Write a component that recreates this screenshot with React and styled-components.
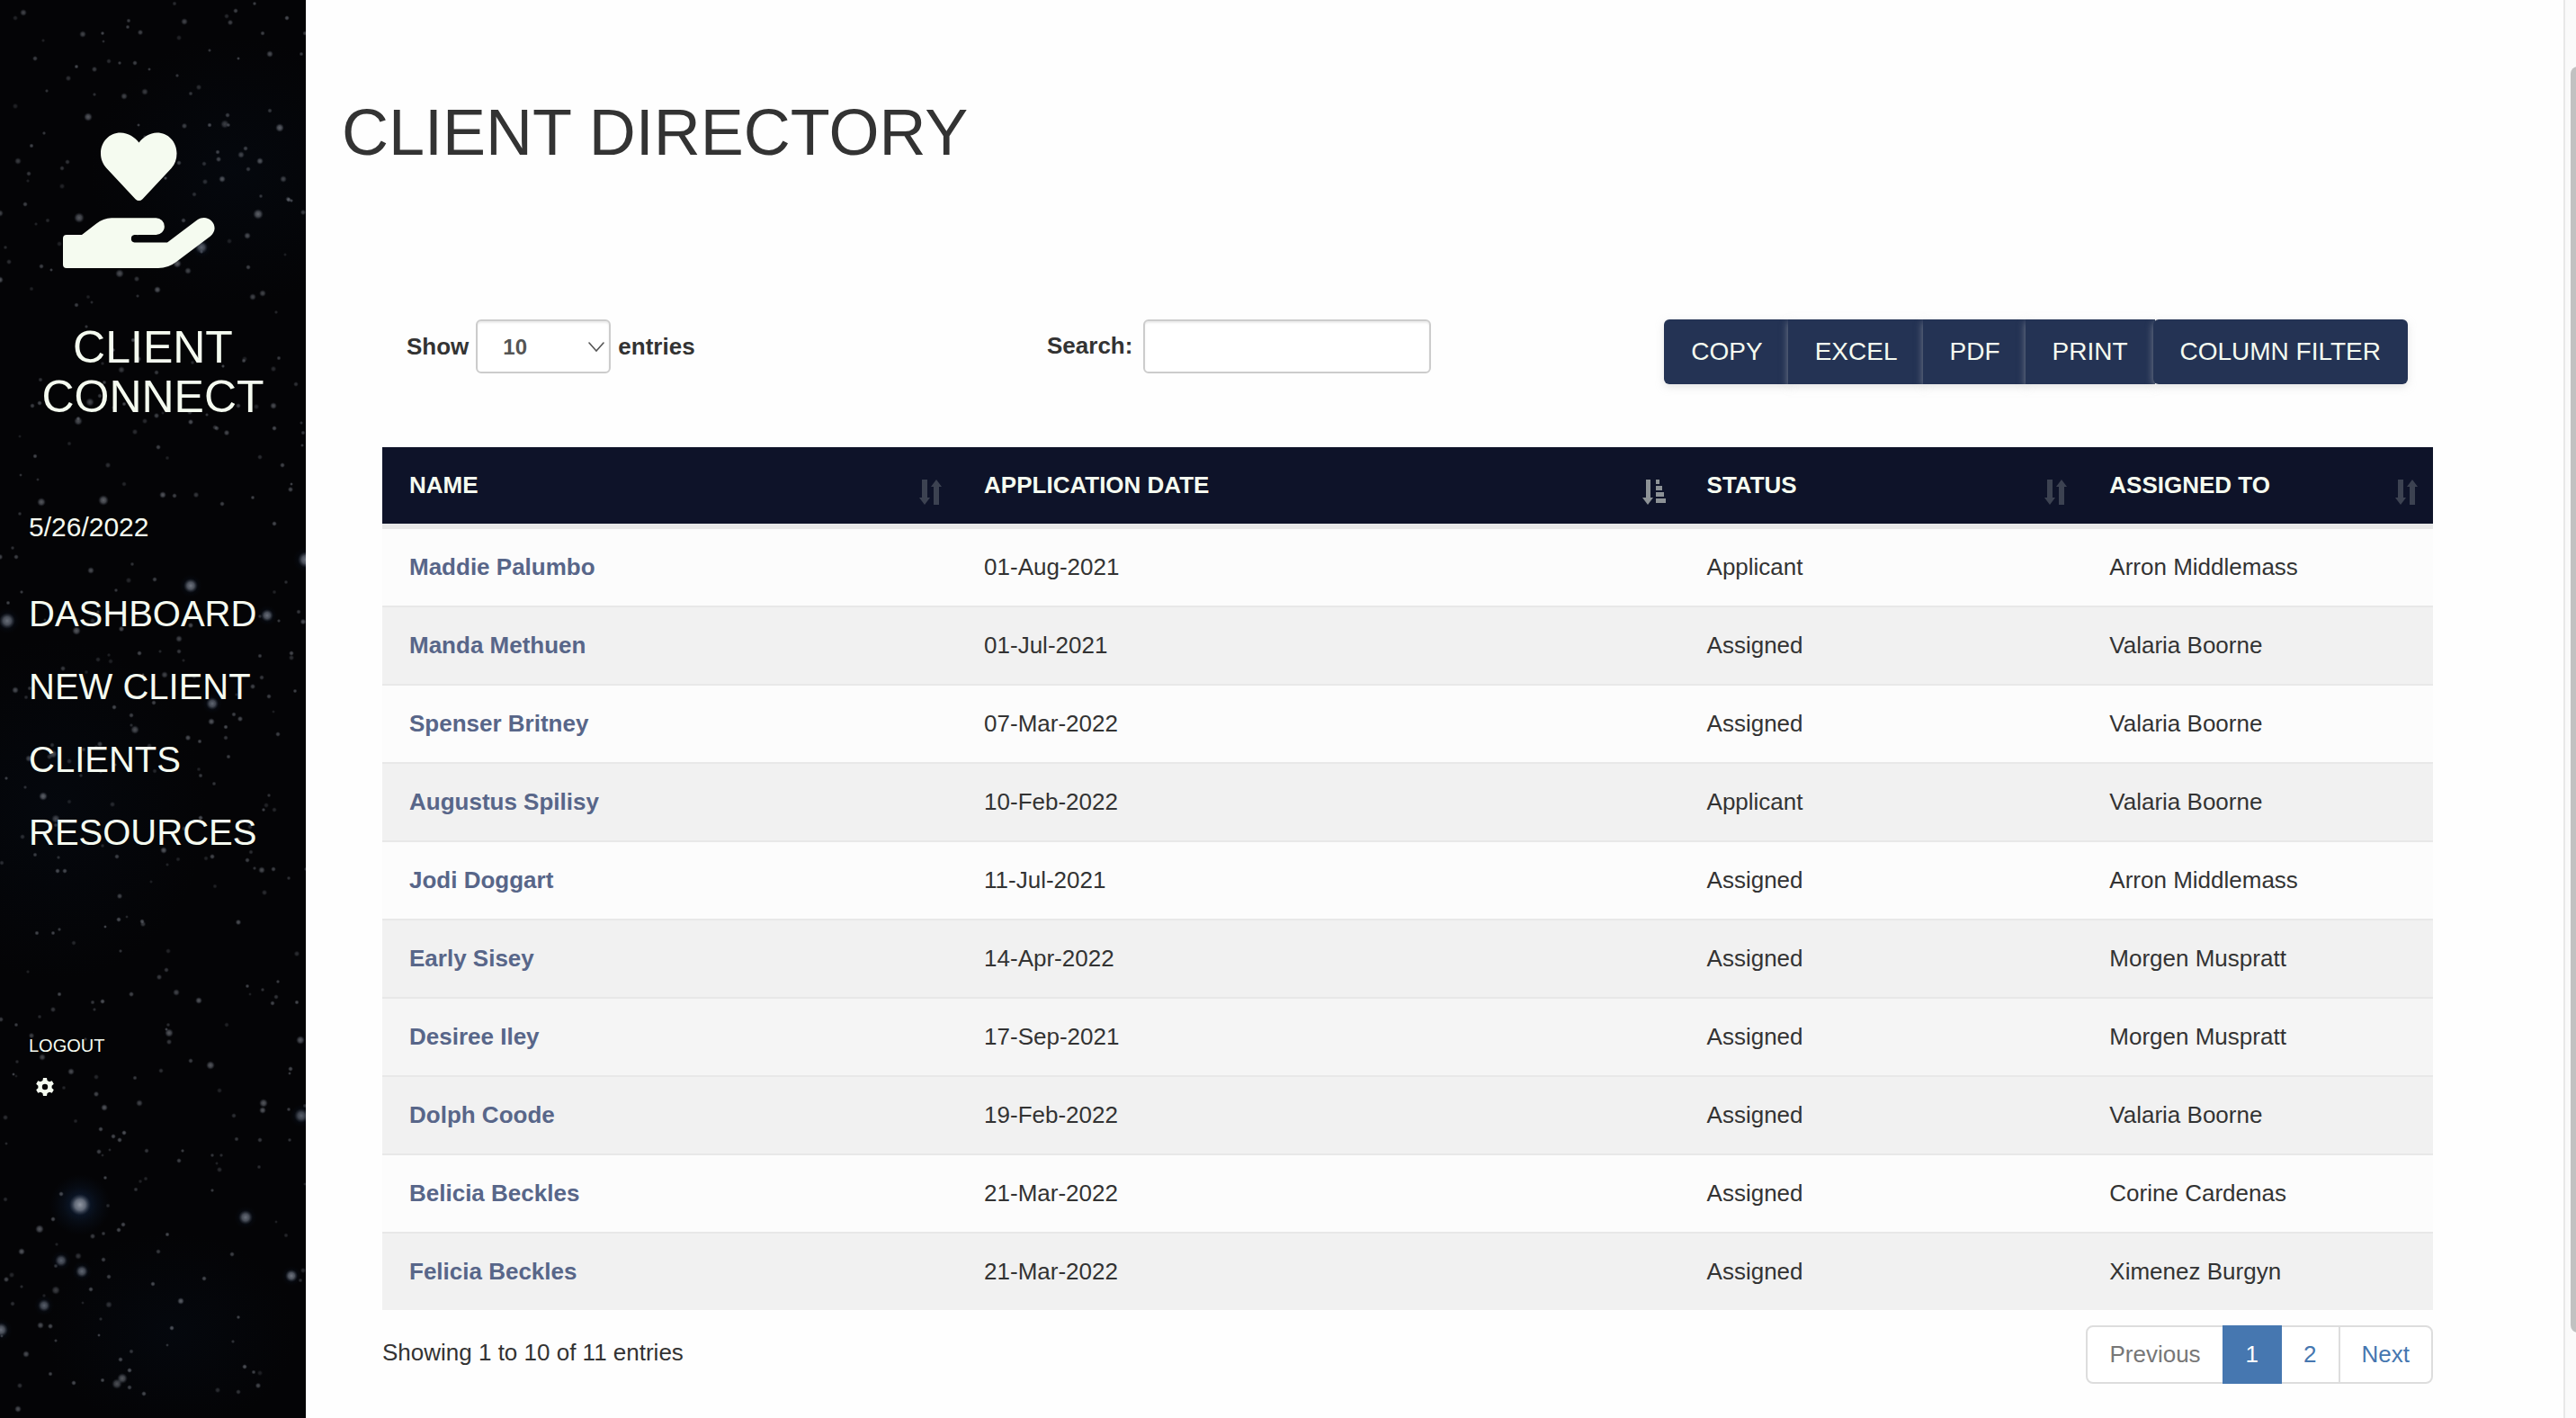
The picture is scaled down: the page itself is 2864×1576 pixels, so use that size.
import React from "react";
import styled, { createGlobalStyle, css } from "styled-components";

const INK = "#333333";
const MINT = "#f5fbf0";
const NAVY = "#0e1329";

const GlobalStyle = createGlobalStyle`
  * { box-sizing: border-box; }
  body {
    margin: 0;
    background: #fefefe;
    color: ${INK};
    font-family: "Liberation Sans", Arial, Helvetica, sans-serif;
    font-size: 26px;
    line-height: 37px;
    overflow: hidden;
  }
  button, input, select { font-family: inherit; }
  a { text-decoration: none; }
`;

const Page = styled.div`
  display: flex;
  height: 100vh;
  overflow: hidden;
`;

/* ---------- sidebar ---------- */

const Sidebar = styled.aside`
  position: relative;
  flex: 0 0 340px;
  overflow: hidden;
  background: #040406;
  color: ${MINT};
`;

const Sky = styled.svg`
  position: absolute;
  inset: 0;
  width: 100%;
  height: 100%;
`;

const SidebarContent = styled.div`
  position: relative;
  display: flex;
  flex-direction: column;
  padding: 147px 0 0;
`;

const Logo = styled.svg`
  width: 169px;
  height: 151px;
  margin-left: 70px;
  fill: ${MINT};
`;

const Brand = styled.h2`
  margin: 61px 0 0;
  font-size: 50px;
  line-height: 55px;
  font-weight: 400;
  text-align: center;
`;

const Today = styled.p`
  margin: 95px 0 0 32px;
  font-size: 30px;
  line-height: 43px;
`;

const Nav = styled.nav`
  display: flex;
  flex-direction: column;
  align-items: flex-start;
  gap: 24px;
  margin: 47px 0 0 32px;
`;

const NavLink = styled.a`
  color: ${MINT};
  font-size: 40px;
  line-height: 57px;
`;

const Account = styled.div`
  display: flex;
  flex-direction: column;
  align-items: flex-start;
  gap: 19px;
  margin: 194px 0 0 32px;
`;

const LogoutLink = styled.a`
  color: ${MINT};
  font-size: 20px;
  line-height: 29px;
`;

const SettingsButton = styled.button`
  display: flex;
  padding: 0;
  margin-left: 6px;
  border: 0;
  background: none;
  color: ${MINT};
`;

/* ---------- main ---------- */

const Main = styled.main`
  flex: 1;
  min-width: 0;
  padding: 108px 145px 0 85px;
`;

const Title = styled.h1`
  margin: 0 0 168px -45px;
  font-size: 72px;
  line-height: 79px;
  font-weight: 400;
`;

const Toolbar = styled.div`
  display: grid;
  grid-template-columns: 32% 1fr auto;
  align-items: start;
  height: 142px;
  padding: 0 28px 0 27px;
`;

const Field = styled.label`
  display: flex;
  align-items: baseline;
  gap: ${(p) => p.$gap}px;
  font-weight: 700;
`;

const control = css`
  height: 60px;
  border: 2px solid #cccccc;
  border-radius: 6px;
  background: #ffffff;
  box-shadow: inset 0 2px 2px rgba(0, 0, 0, 0.075);
  color: #555555;
  font-size: 24px;
`;

const SelectBox = styled.span`
  position: relative;
`;

const LengthSelect = styled.select`
  ${control}
  width: 150px;
  padding: 0 28px;
  appearance: none;
  font-weight: 700;
`;

const Chevron = styled.svg`
  position: absolute;
  right: 7px;
  top: 25px;
  pointer-events: none;
`;

const SearchInput = styled.input`
  ${control}
  width: 320px;
  padding: 10px 20px;
`;

const ButtonGroup = styled.div`
  display: flex;
`;

const ToolButton = styled.button`
  height: 72px;
  margin-left: -2px;
  padding: 0 30px;
  border: 0;
  border-radius: ${(p) => p.$radius};
  background: #243354;
  box-shadow: 0 3px 8px rgba(204, 204, 204, 0.5);
  color: ${MINT};
  font-size: 28px;
  line-height: 40px;
  white-space: nowrap;
`;

const Table = styled.table`
  width: 100%;
  table-layout: fixed;
  border-collapse: separate;
  border-spacing: 0;
`;

const Col = styled.col`
  width: ${(p) => p.$width};
`;

const HeadCell = styled.th`
  position: relative;
  padding: 0;
  border-bottom: 4px solid #e8e8e8;
  background: ${NAVY};
  background-clip: padding-box;
  text-align: left;
`;

const SortButton = styled.button`
  display: block;
  width: 100%;
  padding: 24px 30px;
  border: 0;
  background: none;
  color: ${MINT};
  font-size: 26px;
  line-height: 37px;
  font-weight: 700;
  text-align: left;
`;

const SortIcon = styled.svg`
  position: absolute;
  right: 15px;
  bottom: 21px;
  fill: ${MINT};
  opacity: ${(p) => (p.$active ? 0.55 : 0.2)};
`;

const Row = styled.tr`
  background: ${(p) => (p.$hovered ? "#f5f5f5" : p.$striped ? "#f1f1f1" : "#fcfcfc")};
`;

const Cell = styled.td`
  padding: 24px 30px;
  border-top: 2px solid #e8e8e8;
`;

const ClientLink = styled.a`
  color: #586689;
  font-weight: 700;
`;

const Footer = styled.div`
  display: flex;
  justify-content: space-between;
  align-items: flex-start;
  padding-top: 17px;
`;

const Summary = styled.p`
  margin: 12px 0 0;
`;

const Pagination = styled.nav`
  display: flex;
`;

const PageLink = styled.a`
  padding: 12px 24px;
  margin-left: -2px;
  border: 2px solid ${(p) => (p.$active ? "#4677b0" : "#dddddd")};
  background: ${(p) => (p.$active ? "#4677b0" : "#ffffff")};
  color: ${(p) => (p.$active ? "#ffffff" : p.$disabled ? "#777777" : "#4677b0")};
  position: relative;
  z-index: ${(p) => (p.$active ? 1 : 0)};
  &:first-child { border-radius: 8px 0 0 8px; }
  &:last-child { border-radius: 0 8px 8px 0; }
`;

/* ---------- scroll rail ---------- */

const Rail = styled.div`
  flex: 0 0 14px;
  padding: 74px 0 95px 6px;
  border-left: 2px solid #e8e8e8;
  background: #fafafa;
  overflow: hidden;
`;

const Thumb = styled.div`
  width: 16px;
  height: 100%;
  border-radius: 8px;
  background: #c1c1c1;
`;

/* ---------- night sky ---------- */

// x, y, radius, brightness
const STARS = [
  [98, 130, 5, 0.5], [138, 107, 4, 0.4], [161, 102, 4, 0.35], [250, 138, 5, 0.35], [311, 142, 5, 0.55],
  [273, 165, 3, 0.4], [268, 172, 4, 0.4], [289, 179, 4, 0.5], [247, 199, 4, 0.5], [315, 199, 4, 0.4],
  [276, 188, 3, 0.35], [321, 222, 3, 0.5], [287, 238, 6, 0.55], [88, 242, 6, 0.5], [224, 275, 7, 0.5],
  [197, 293, 5, 0.5], [209, 301, 4, 0.4], [133, 304, 5, 0.45], [175, 322, 4, 0.5], [275, 262, 4, 0.45],
  [204, 245, 3, 0.4], [28, 227, 3, 0.4], [0, 237, 4, 0.4], [0, 311, 4, 0.5], [20, 179, 4, 0.35],
  [32, 193, 3, 0.35], [46, 296, 3, 0.4], [281, 330, 4, 0.4], [292, 326, 4, 0.4], [276, 297, 3, 0.4],
  [199, 181, 3, 0.4], [135, 411, 4, 0.35], [174, 414, 3, 0.35], [100, 447, 5, 0.4], [304, 451, 4, 0.45],
  [87, 468, 5, 0.45], [241, 476, 3, 0.4], [265, 451, 3, 0.4], [329, 427, 3, 0.3], [46, 558, 5, 0.5],
  [115, 556, 6, 0.55], [181, 550, 4, 0.5], [194, 551, 3, 0.4], [247, 560, 3, 0.4], [305, 582, 3, 0.45],
  [340, 622, 9, 0.65], [212, 651, 8, 0.65], [297, 684, 7, 0.6], [8, 690, 9, 0.6], [85, 701, 5, 0.5],
  [101, 634, 4, 0.45], [172, 644, 3, 0.4], [199, 710, 4, 0.4], [199, 724, 3, 0.35], [155, 726, 3, 0.45],
  [324, 726, 3, 0.45], [183, 750, 4, 0.4], [236, 782, 7, 0.55], [235, 802, 4, 0.5], [127, 786, 3, 0.45],
  [150, 811, 5, 0.45], [146, 795, 3, 0.4], [309, 816, 3, 0.4], [59, 838, 5, 0.45], [32, 843, 4, 0.4],
  [48, 885, 5, 0.55], [62, 910, 5, 0.4], [182, 945, 4, 0.5], [130, 952, 3, 0.4], [72, 968, 3, 0.45],
  [291, 967, 4, 0.45], [304, 966, 3, 0.4], [275, 956, 3, 0.4], [17, 767, 4, 0.45], [291, 753, 3, 0.35],
  [299, 774, 3, 0.4], [18, 619, 3, 0.4], [89, 1339, 12, 0.85], [68, 1401, 7, 0.5], [91, 1413, 7, 0.55],
  [49, 1451, 7, 0.5], [1, 1478, 8, 0.6], [273, 1353, 8, 0.6], [324, 1418, 7, 0.65], [335, 1240, 8, 0.5],
  [293, 1226, 5, 0.5], [292, 1234, 4, 0.5], [234, 1184, 5, 0.5], [334, 1156, 5, 0.5], [188, 1148, 5, 0.5],
  [221, 1112, 4, 0.5], [114, 1113, 3, 0.5], [196, 1103, 4, 0.4], [116, 1231, 4, 0.5], [155, 1226, 4, 0.4],
  [112, 1255, 3, 0.45], [126, 1263, 3, 0.45], [138, 1259, 3, 0.5], [44, 1366, 5, 0.5], [24, 1391, 4, 0.5],
  [201, 1446, 4, 0.55], [191, 1476, 3, 0.5], [45, 1473, 4, 0.45], [29, 1505, 4, 0.45], [136, 1532, 6, 0.5],
  [130, 1538, 6, 0.45], [144, 1523, 3, 0.5], [144, 1542, 3, 0.4], [160, 1549, 3, 0.45], [134, 1511, 3, 0.45],
  [20, 1566, 4, 0.45], [272, 1519, 3, 0.5], [68, 1327, 3, 0.45], [59, 1355, 3, 0.45], [132, 1367, 3, 0.45],
  [137, 1361, 3, 0.45], [62, 1434, 5, 0.35], [121, 1419, 3, 0.4], [101, 1433, 3, 0.45], [115, 1400, 3, 0.4],
  [121, 1450, 4, 0.3], [176, 1391, 3, 0.35], [227, 1421, 3, 0.45], [258, 1394, 3, 0.4], [47, 1175, 4, 0.4],
  [79, 1191, 4, 0.45], [323, 1188, 3, 0.45], [199, 1290, 3, 0.4], [289, 1267, 3, 0.35], [87, 1396, 4, 0.3],
  [26, 14, 4, 0.4], [92, 38, 4, 0.4], [205, 24, 4, 0.4], [300, 60, 4, 0.45], [262, 12, 3, 0.4], [150, 70, 3, 0.4],
];

// Faint background stars from a small seeded generator, so the sky is the same on every load.
const DUST = (() => {
  let seed = 41;
  const next = () => {
    seed = (seed * 16807) % 2147483647;
    return seed / 2147483647;
  };
  return Array.from({ length: 330 }, () => [
    Math.round(next() * 340),
    Math.round(next() * 1576),
    2 + next() * 1.5,
    0.12 + next() * 0.2,
  ]);
})();

function NightSky() {
  return (
    <Sky viewBox="0 0 340 1576" preserveAspectRatio="xMidYMin slice" aria-hidden="true">
      <defs>
        <radialGradient id="star">
          <stop offset="0" stopColor="#a9adb5" />
          <stop offset="0.5" stopColor="#8a8f9a" stopOpacity="0.8" />
          <stop offset="1" stopColor="#4a5260" stopOpacity="0" />
        </radialGradient>
        <radialGradient id="halo">
          <stop offset="0" stopColor="#122748" stopOpacity="0.7" />
          <stop offset="1" stopColor="#0a1628" stopOpacity="0" />
        </radialGradient>
        <radialGradient id="haze">
          <stop offset="0" stopColor="#050a12" stopOpacity="0.6" />
          <stop offset="1" stopColor="#050a12" stopOpacity="0" />
        </radialGradient>
      </defs>
      <ellipse cx="260" cy="190" rx="160" ry="150" fill="url(#haze)" />
      <ellipse cx="60" cy="900" rx="170" ry="190" fill="url(#haze)" />
      <ellipse cx="190" cy="1480" rx="140" ry="110" fill="url(#haze)" />
      {DUST.map(([x, y, r, o], i) => (
        <circle key={i} cx={x} cy={y} r={r} fill="url(#star)" opacity={o * 1.5} />
      ))}
      <circle cx="89" cy="1339" r="34" fill="url(#halo)" />
      {STARS.filter((s) => s[2] > 6).map(([x, y, r], i) => (
        <circle key={i} cx={x} cy={y} r={r * 1.6} fill="url(#halo)" opacity="0.6" />
      ))}
      {STARS.map(([x, y, r, o], i) => (
        <circle key={i} cx={x} cy={y} r={r} fill="url(#star)" opacity={o} />
      ))}
    </Sky>
  );
}

function GivingHand() {
  return (
    <Logo viewBox="70 147 169 151" aria-hidden="true">
      <path d="M154.500 158.500C150 152.500 142.500 147.500 134 147.500C121.500 147.500 112 157.500 112 170.500C112 177 114.500 182.500 118.500 187L150.500 221.200Q154.500 225 158.500 221.200L190.500 187C194.500 182.500 196.500 177 196.500 170.500C196.500 157.500 187 147.500 174.500 147.500C166.500 147.500 159 152.500 154.500 158.500Z" />
      <path d="M74 261H91L106.500 249Q115 242.300 124 242.300H173.500A9.300 9.300 0 0 1 173.500 261H149.500A4.300 4.300 0 0 0 149.500 269.500H186L219.500 244.200C232 236 246 252 234 262.500L196 291Q187 298 176 298H74Q70 298 70 294V265Q70 261 74 261Z" />
    </Logo>
  );
}

function Gear() {
  return (
    <svg width="24" height="24" viewBox="0 0 24 24" aria-hidden="true">
      <path
        fill="currentColor"
        fillRule="evenodd"
        d="M10 2H14L14.600 4.900L17 6.200L19.800 5.300L21.800 8.700L19.600 10.700V13.300L21.800 15.300L19.800 18.700L17 17.800L14.600 19.100L14 22H10L9.400 19.100L7 17.800L4.200 18.700L2.200 15.300L4.400 13.300V10.700L2.200 8.700L4.200 5.300L7 6.200L9.400 4.900ZM12 8.800A3.200 3.200 0 1 0 12 15.200A3.200 3.200 0 1 0 12 8.800Z"
      />
    </svg>
  );
}

function SortGlyph({ direction }) {
  if (direction === "asc") {
    return (
      <SortIcon $active width="28" height="28" viewBox="0 0 28 28" aria-hidden="true">
        <path d="M5 0H10V20H13L7 28L1 20H5ZM16 0H20V5H16ZM16 7H23V12H16ZM16 14H25V19H16ZM16 21H27V26H16Z" />
      </SortIcon>
    );
  }
  return (
    <SortIcon width="28" height="28" viewBox="0 0 28 28" aria-hidden="true">
      <path d="M4 0H10V20H13L7 28L1 20H4ZM20 0L26 8H23V28H17V8H14Z" />
    </SortIcon>
  );
}

/* ---------- data ---------- */

const NAV = ["DASHBOARD", "NEW CLIENT", "CLIENTS", "RESOURCES"];

const ACTIONS = [
  { label: "COPY", radius: "6px 0 0 6px" },
  { label: "EXCEL", radius: "0" },
  { label: "PDF", radius: "0" },
  { label: "PRINT", radius: "0" },
  { label: "COLUMN FILTER", radius: "6px" },
];

const COLUMNS = [
  { label: "NAME", width: "28.03%" },
  { label: "APPLICATION DATE", width: "35.24%", sort: "asc" },
  { label: "STATUS", width: "19.64%" },
  { label: "ASSIGNED TO", width: "17.09%" },
];

const CLIENTS = [
  ["Maddie Palumbo", "01-Aug-2021", "Applicant", "Arron Middlemass"],
  ["Manda Methuen", "01-Jul-2021", "Assigned", "Valaria Boorne"],
  ["Spenser Britney", "07-Mar-2022", "Assigned", "Valaria Boorne"],
  ["Augustus Spilisy", "10-Feb-2022", "Applicant", "Valaria Boorne"],
  ["Jodi Doggart", "11-Jul-2021", "Assigned", "Arron Middlemass"],
  ["Early Sisey", "14-Apr-2022", "Assigned", "Morgen Muspratt"],
  ["Desiree Iley", "17-Sep-2021", "Assigned", "Morgen Muspratt"],
  ["Dolph Coode", "19-Feb-2022", "Assigned", "Valaria Boorne"],
  ["Belicia Beckles", "21-Mar-2022", "Assigned", "Corine Cardenas"],
  ["Felicia Beckles", "21-Mar-2022", "Assigned", "Ximenez Burgyn"],
];

const HOVERED_ROW = 6;

export default function App() {
  return (
    <>
      <GlobalStyle />
      <Page>
        <Sidebar>
          <NightSky />
          <SidebarContent>
            <GivingHand />
            <Brand>
              CLIENT
              <br />
              CONNECT
            </Brand>
            <Today>5/26/2022</Today>
            <Nav>
              {NAV.map((item) => (
                <NavLink key={item} href="#">{item}</NavLink>
              ))}
            </Nav>
            <Account>
              <LogoutLink href="#">LOGOUT</LogoutLink>
              <SettingsButton type="button" aria-label="Settings">
                <Gear />
              </SettingsButton>
            </Account>
          </SidebarContent>
        </Sidebar>

        <Main>
          <Title>CLIENT DIRECTORY</Title>

          <Toolbar>
            <Field $gap={8} htmlFor="length">
              Show
              <SelectBox>
                <LengthSelect id="length" defaultValue="10">
                  <option>10</option>
                  <option>25</option>
                  <option>50</option>
                  <option>100</option>
                </LengthSelect>
                <Chevron width="18" height="11" viewBox="0 0 18 11" aria-hidden="true">
                  <path d="M1 1L9 10L17 1" fill="none" stroke="#555555" strokeWidth="1.600" strokeLinecap="round" />
                </Chevron>
              </SelectBox>
              entries
            </Field>
            <Field $gap={12} htmlFor="search">
              Search:
              <SearchInput id="search" type="search" />
            </Field>
            <ButtonGroup>
              {ACTIONS.map(({ label, radius }) => (
                <ToolButton key={label} type="button" $radius={radius}>{label}</ToolButton>
              ))}
            </ButtonGroup>
          </Toolbar>

          <Table>
            <colgroup>
              {COLUMNS.map((c) => (
                <Col key={c.label} $width={c.width} />
              ))}
            </colgroup>
            <thead>
              <tr>
                {COLUMNS.map((c) => (
                  <HeadCell key={c.label} aria-sort={c.sort ? "ascending" : undefined}>
                    <SortButton type="button">{c.label}</SortButton>
                    <SortGlyph direction={c.sort} />
                  </HeadCell>
                ))}
              </tr>
            </thead>
            <tbody>
              {CLIENTS.map(([name, date, status, owner], i) => (
                <Row key={name} $striped={i % 2 === 1} $hovered={i === HOVERED_ROW}>
                  <Cell><ClientLink href="#">{name}</ClientLink></Cell>
                  <Cell>{date}</Cell>
                  <Cell>{status}</Cell>
                  <Cell>{owner}</Cell>
                </Row>
              ))}
            </tbody>
          </Table>

          <Footer>
            <Summary>Showing 1 to 10 of 11 entries</Summary>
            <Pagination aria-label="Pages">
              <PageLink href="#" $disabled>Previous</PageLink>
              <PageLink href="#" $active>1</PageLink>
              <PageLink href="#">2</PageLink>
              <PageLink href="#">Next</PageLink>
            </Pagination>
          </Footer>
        </Main>

        <Rail>
          <Thumb />
        </Rail>
      </Page>
    </>
  );
}
